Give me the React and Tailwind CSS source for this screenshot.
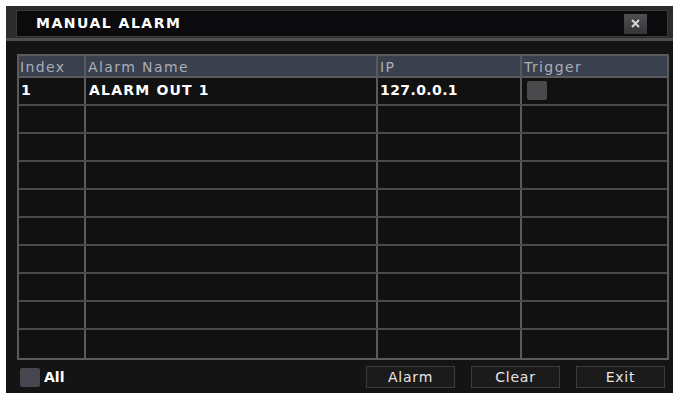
import React from "react";

const rows = Array.from({ length: 10 }, (_, i) => i);

export default function App() {
  return (
    <div
      className="w-[676px] h-[393px] bg-white pt-[6px] pl-[6px] pr-[3px] overflow-hidden"
      style={{ fontFamily: '"DejaVu Sans", Verdana, sans-serif' }}
    >
      <div className="h-full flex flex-col bg-[#141414]">
        {/* title bar */}
        <div className="bg-[#2c2c2c] pl-[10px] pr-[5px] pt-[4px] pb-[1px] border-b-[3px] border-[#4e4e4e]">
          <div className="h-[27px] bg-[#0b0b0d] border border-[#3a3a3a] flex items-center justify-between pl-[19px] pr-[20px]">
            <span className="text-white font-bold text-[14px] tracking-[1.5px]">MANUAL ALARM</span>
            <div className="w-[23px] h-[20px] bg-gradient-to-b from-[#505052] to-[#353537] flex items-center justify-center">
              <svg width="11" height="11" viewBox="0 0 11 11">
                <path d="M2 2 L9 9 M9 2 L2 9" stroke="#d8d8d8" strokeWidth="2" />
              </svg>
            </div>
          </div>
        </div>
        {/* body */}
        <div className="flex-1 flex flex-col pl-[11px] pr-[4px] pt-[13px]">
          <div className="border-2 border-[#5a5a5a] bg-[#111111]">
            <div className="grid grid-cols-[67px_292px_144px_1fr] h-[22px] bg-[#3a404e] border-b-2 border-[#5a5a5a] text-[14px] tracking-[1.4px] text-[#a9aeb8]">
              <div className="border-r-2 border-[#5a5a5a] pl-[1px] leading-[22px]">Index</div>
              <div className="border-r-2 border-[#5a5a5a] pl-[2px] leading-[22px]">Alarm Name</div>
              <div className="border-r-2 border-[#5a5a5a] pl-[2px] leading-[22px]">IP</div>
              <div className="pl-[2px] leading-[22px]">Trigger</div>
            </div>
            {rows.map((i) => (
              <div
                key={i}
                className={`grid grid-cols-[67px_292px_144px_1fr] h-[28px] text-[14px] tracking-[1.2px] font-bold text-white ${
                  i < 9 ? "border-b-2 border-[#4a4a4a]" : ""
                }`}
              >
                <div className="border-r-2 border-[#5a5a5a] pl-[2px] leading-[24px]">{i === 0 ? "1" : ""}</div>
                <div className="border-r-2 border-[#5a5a5a] pl-[3px] leading-[24px]">{i === 0 ? "ALARM OUT 1" : ""}</div>
                <div className="border-r-2 border-[#5a5a5a] pl-[2px] leading-[24px] tracking-[0.4px]">{i === 0 ? "127.0.0.1" : ""}</div>
                <div className="pl-[5px] pt-[3px]">
                  {i === 0 && <div className="w-[20px] h-[19px] bg-[#4a4a4c] rounded-[2px]" />}
                </div>
              </div>
            ))}
          </div>
          {/* footer */}
          <div className="flex items-center pt-[6px] pl-[3px]">
            <div className="w-[20px] h-[19px] bg-[#46464e] rounded-[2px]" />
            <span className="ml-[4px] text-white font-bold text-[14px]">All</span>
            <div className="ml-auto flex gap-[16px] pr-[4px]">
              {["Alarm", "Clear", "Exit"].map((b) => (
                <div
                  key={b}
                  className="w-[89px] h-[22px] bg-[#1b1b1b] border border-[#3c3c3c] flex items-center justify-center text-[14px] tracking-[0.8px] text-[#e6e6e6]"
                >
                  {b}
                </div>
              ))}
            </div>
          </div>
        </div>
      </div>
    </div>
  );
}
